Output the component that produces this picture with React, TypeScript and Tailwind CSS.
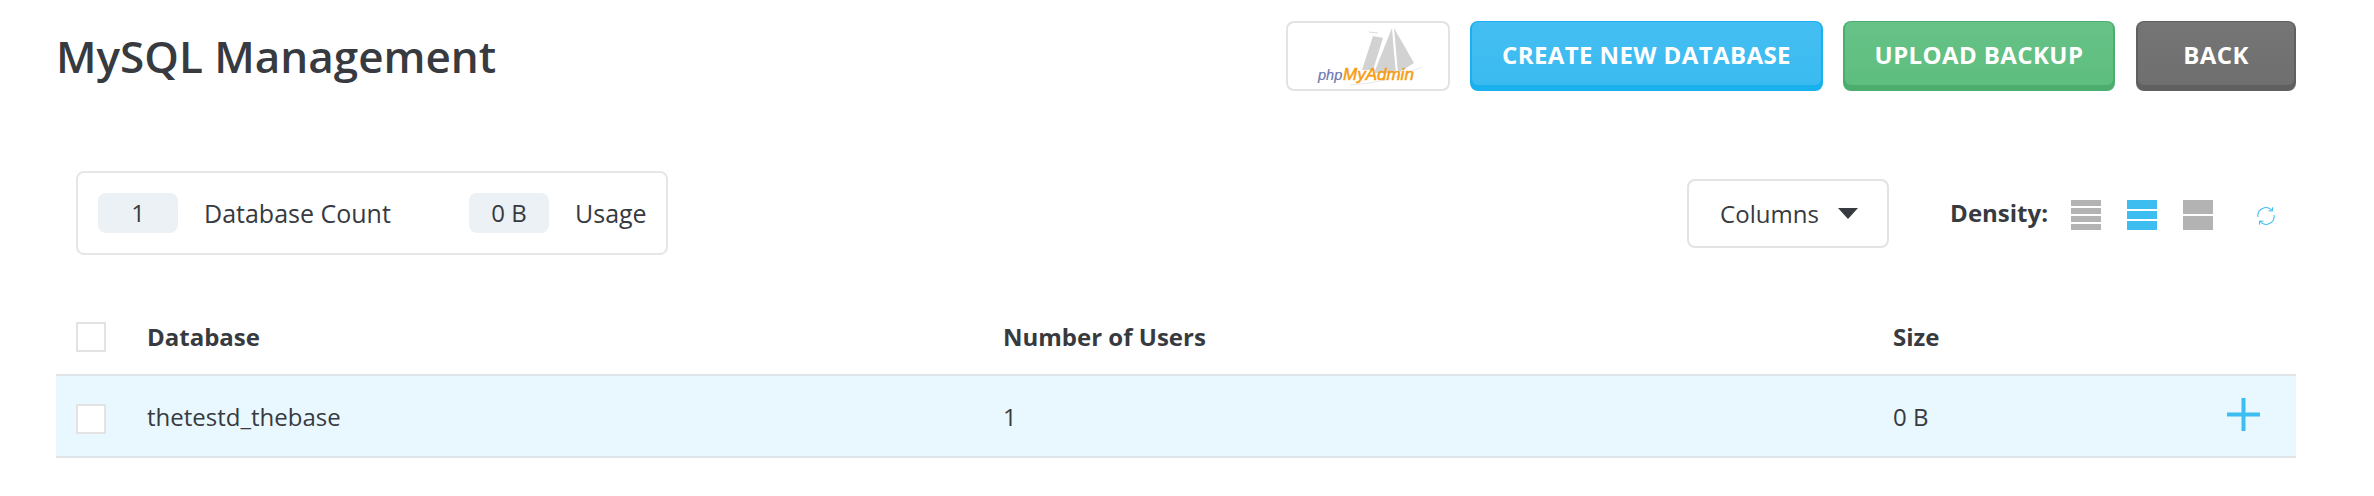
import React from 'react';

const font = { fontFamily: '"Open Sans", sans-serif' };

function ActionButton({ label, width, outer, inner }: { label: string; width: string; outer: string; inner: string }) {
    return (
        <button className={`${width} ${outer} h-[70px] rounded-lg px-[2px] pt-[1px] pb-[6px]`}>
            <span className={`${inner} flex h-full w-full items-center justify-center rounded-md pt-[3px] text-[24px] font-bold tracking-[0.4px] text-white`}>
                {label}
            </span>
        </button>
    );
}

function PhpMyAdminLogo() {
    return (
        <div className="h-[70px] w-[164px] rounded-lg border-2 border-[#e3e3e3] bg-white">
            <svg width="160" height="66" viewBox="0 0 160 66">
                <g fill="#d2d2d2">
                    <polygon points="85,13 95,15 85,47 74,47" />
                    <polygon points="104,5 106,30 108,50 86,50" />
                    <polygon points="106,5 126,40 110,50" />
                </g>
                <path d="M81 9 L90 10" stroke="#dcdcdc" strokeWidth="1" />
                <path d="M62 62 Q100 60 134 44" stroke="#e8e8e8" strokeWidth="1" fill="none" />
                <text x="30" y="57" fontFamily="Liberation Sans" fontStyle="italic" fontSize="14.5" fill="#6c78af" stroke="#6c78af" strokeWidth="0.2">php</text>
                <text x="55" y="57" fontFamily="Liberation Sans" fontStyle="italic" fontSize="17" fill="#f89c0e" stroke="#f89c0e" strokeWidth="0.5">MyAdmin</text>
            </svg>
        </div>
    );
}

function DensityIcon({ bars, color }: { bars: number; color: string }) {
    return (
        <div className="mt-[4px] flex h-[30px] w-[30px] flex-col gap-[2px]">
            {Array.from({ length: bars }).map((_, i) => (
                <div key={i} className={`${color} flex-1`} />
            ))}
        </div>
    );
}

function RefreshIcon() {
    return (
        <svg width="20" height="20" viewBox="0 0 20 20" fill="none" stroke="#3dbdf0" strokeWidth="1.1" className="mt-[6px]">
            <path d="M2 11 A8 8 0 0 1 16 4.5" />
            <path d="M12.5 4.8 L16.3 5 L16.6 1.4" />
            <path d="M18 9 A8 8 0 0 1 4 15.5" />
            <path d="M7.5 15.2 L3.7 15 L3.4 18.6" />
        </svg>
    );
}

function Checkbox() {
    return <div className="h-[30px] w-[30px] border-2 border-[#e3e3e3] bg-white" />;
}

export default function App() {
    return (
        <div style={font} className="h-[496px] w-[2374px] bg-white pt-[21px] pl-[56px] pr-[78px] text-[24px] text-[#373a3f]">
            <div className="flex items-center justify-between">
                <h1 className="text-[44px] font-[550] leading-none">MySQL Management</h1>
                <div className="flex items-center">
                    <PhpMyAdminLogo />
                    <div className="ml-[20px]">
                        <ActionButton label="CREATE NEW DATABASE" width="w-[353px]" outer="bg-[#19b0ee]" inner="bg-gradient-to-b from-[#44bef2] to-[#3abbf0]" />
                    </div>
                    <div className="ml-[20px]">
                        <ActionButton label="UPLOAD BACKUP" width="w-[272px]" outer="bg-[#4cae6e]" inner="bg-gradient-to-b from-[#67c287] to-[#5dbe7f]" />
                    </div>
                    <div className="ml-[21px]">
                        <ActionButton label="BACK" width="w-[160px]" outer="bg-[#5f605f]" inner="bg-gradient-to-b from-[#747574] to-[#6e6f6e]" />
                    </div>
                </div>
            </div>

            <div className="mt-[80px] flex items-center justify-between pl-[20px] pr-[20px]">
                <div className="flex h-[84px] w-[592px] items-center rounded-lg border-2 border-[#e6e6e6] pl-[20px] text-[25px]">
                    <span className="w-[80px] rounded-lg bg-[#ecf1f5] py-[4px] text-center text-[24px] leading-[32px]">1</span>
                    <span className="ml-[26px] w-[265px] pt-[2px]">Database Count</span>
                    <span className="w-[80px] rounded-lg bg-[#ecf1f5] py-[4px] text-center text-[24px] leading-[32px]">0 B</span>
                    <span className="ml-[26px] pt-[2px]">Usage</span>
                </div>
                <div className="flex items-center">
                    <button className="mt-[1px] flex h-[69px] w-[202px] items-center rounded-lg border-2 border-[#e3e3e3] pl-[31px]">
                        Columns
                        <span className="ml-[19px] h-0 w-0 border-x-[10.5px] border-t-[11px] border-x-transparent border-t-[#373a3f]" />
                    </button>
                    <span className="ml-[61px] font-bold">Density:</span>
                    <div className="ml-[23px]"><DensityIcon bars={4} color="bg-[#b3b3b3]" /></div>
                    <div className="ml-[26px]"><DensityIcon bars={3} color="bg-[#3dbdf0]" /></div>
                    <div className="ml-[26px]"><DensityIcon bars={2} color="bg-[#b3b3b3]" /></div>
                    <div className="ml-[43px]"><RefreshIcon /></div>
                </div>
            </div>

            <div className="mt-[47px]">
                <div className="grid h-[74px] grid-cols-[91px_856px_890px_1fr] items-center border-b-2 border-[#dfe5e8] pb-[2px]">
                    <div className="pl-[20px]"><Checkbox /></div>
                    <div className="font-bold">Database</div>
                    <div className="font-bold">Number of Users</div>
                    <div className="font-bold">Size</div>
                </div>
                <div className="grid h-[82px] grid-cols-[91px_856px_890px_1fr] items-center border-b-2 border-[#dfe5e8] bg-[#e9f7fe] pt-[2px]">
                    <div className="pl-[20px] pt-[4px]"><Checkbox /></div>
                    <div>thetestd_thebase</div>
                    <div>1</div>
                    <div className="flex items-center justify-between pr-[36px]">
                        <span>0 B</span>
                        <svg width="33" height="33" viewBox="0 0 33 33" className="-mt-[6px]">
                            <path d="M0 16.5 H33 M16.5 0 V33" stroke="#3dbdf0" strokeWidth="4" />
                        </svg>
                    </div>
                </div>
            </div>
        </div>
    );
}
